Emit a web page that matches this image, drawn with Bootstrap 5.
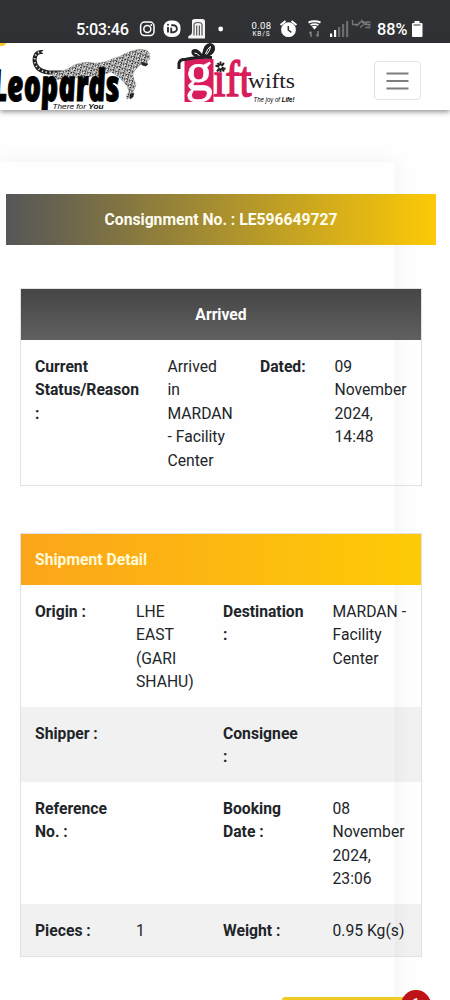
<!DOCTYPE html>
<html lang="en">
<head>
<meta charset="utf-8">
<meta name="viewport" content="width=device-width, initial-scale=1">
<title>Leopards Courier - Track Shipment</title>
<link href="https://cdn.jsdelivr.net/npm/bootstrap@5.3.0/dist/css/bootstrap.min.css" rel="stylesheet">
<style>
html{overflow:hidden}
body{font-family:Roboto,sans-serif;font-size:15.7px;line-height:23.45px;color:#212529;background:#fefefe;height:1000px;overflow:hidden}
.statusbar{height:43px;background:#303134;color:#fff}
.statusbar svg,.brandrow svg{display:block}
.brandrow{height:67px;background:#fff;box-shadow:0 2px 5px rgba(0,0,0,.42);z-index:2}
.brandrow .navbar-toggler{width:47px;height:39px;margin:1px 29px 0 0;border:1px solid #e2e2e2;border-radius:4px}
.panel{width:395px;height:860px;margin-top:52px;padding-top:32px;border-radius:0 4px 0 0;background:#fefefe;box-shadow:0 0 20px rgba(0,0,0,.06)}
.consign{width:430px;height:51px;padding-top:1px;margin-left:6px;background:linear-gradient(90deg,#555658,#fdc907);color:#fffef0}
.details{width:402px;margin-left:20px;border:1px solid #dee2e6}
.details table{width:400px;table-layout:fixed;border-collapse:collapse;margin:0}
.details th,.details td{padding:15px 13px 12px 14.5px;vertical-align:top;text-align:left}
.details th{padding-left:14px}
.details thead th{padding:14px 14px 13px 14px;height:51px;line-height:24px;color:#fff}
.dark-head{background:linear-gradient(#454545,#606060)}
.gold-head{background:linear-gradient(90deg,#fca51b,#fecb06)}
.gold-head th{color:#fffbd8 !important}
.shade{background:rgba(0,0,0,.05)}
.chatbar{left:282px;top:997px;width:140px;height:3px;background:#f0cb22;border-radius:3px 0 0 0}
.chatdot{left:401px;top:990px;width:30px;height:30px;background:#bd1216;color:#fff;font-size:11px;line-height:26px}
</style>
</head>
<body class="position-relative">
<div class="statusbar">
<svg width="450" height="43" viewBox="0 0 450 43" font-family="Roboto, sans-serif" fill="#fff">
  <text x="76" y="34.5" font-size="16.3" font-weight="500" textLength="53">5:03:46</text>
  <g fill="none" stroke="#fff" stroke-width="1.5"><rect x="140.6" y="22" width="13.4" height="13.6" rx="4"/><circle cx="147.3" cy="28.9" r="3.5"/></g>
  <circle cx="151.3" cy="24.9" r="1"/>
  <rect x="163.5" y="20.5" width="17" height="16.5" rx="7"/>
  <g fill="none" stroke="#303134" stroke-width="1.9"><path d="M168 27v5.5M171.2 25.2h2.200a3.500 3.500 0 0 1 0 7h-2.200v-4.400"/></g><circle cx="168" cy="24.800" r="1" fill="#303134"/>
  <path d="M192 20.500q.5-1.500 2.500-1.500h8q2.500 0 2.500 2.500v17h-16.500q-1-2.500 1-3 2.500-.5 2.500-4z" fill="#f4f4f4"/>
  <path d="M194 35.500V25q0-2.500 4-2.500t4 2.500v10.500M196.700 35.500V25.500M199.400 35.500V25.500" fill="none" stroke="#555" stroke-width="1.200"/>
  <circle cx="220.700" cy="29" r="2.400"/>
  <text x="251.500" y="29" font-size="9.500" textLength="19.500">0.08</text>
  <text x="252.500" y="36" font-size="6.500" textLength="17">KB/S</text>
  <circle cx="288.500" cy="29.700" r="7.400"/><path d="M280.500 25l5-4M296.500 25l-5-4" stroke="#fff" stroke-width="2"/><path d="M288.300 26v4l3 2.300" fill="none" stroke="#303134" stroke-width="1.500"/>
  <path d="M308.500 22.500q6-2.500 12 0M310.500 25q4-1.700 8 0" fill="none" stroke="#fff" stroke-width="1.900"/><path d="M311.800 26.500q2.700-1.400 5.400 0l-2.700 3z"/>
  <path d="M311 37v-5m-1.500 1.500 1.500-2M318 31v5m-1.500-1.500 1.500 2" stroke="#888" fill="none" stroke-width="1.400"/>
  <path d="M330 33.500h2.200V37H330zM334 30h2.200v7H334z"/><path d="M338 27h2.200v10H338zM342 24h2.200v13H342zM346 21h2.200v16H346z" fill="#6c6d70"/>
  <g fill="none" stroke="#77787b" stroke-width="1.300"><path d="M352.500 20v4.500h6q.5-2.500 3-2.500 2 0 2.500 2.500h6.500M356 26l3-2M360 27.500l3-2.500M361 20l9 6M370.500 22h-5M370.500 27.500h-5"/></g>
  <text x="377" y="34.800" font-size="16.300" font-weight="500" textLength="30.500">88%</text>
  <path d="M414.500 21h5v2h2q1 0 1 1v12q0 1-1 1h-8.500q-1 0-1-1V24q0-1 1-1h1.500z"/><path d="M413.500 24h7v2h-7z" fill="#999"/>
</svg>
</div>
<nav class="navbar brandrow p-0 flex-nowrap justify-content-between position-relative">
<svg width="310" height="67" viewBox="0 43 310 67">
  <defs><pattern id="spots" width="5.300" height="4.700" patternUnits="userSpaceOnUse" patternTransform="rotate(17)"><rect width="5.300" height="4.700" fill="#f2f2f2"/><path d="M.3 1.200q1.200-1.400 2.100 0l-.5 1M3.400.6l1.500.9-.8 1.200M.9 3.600l1.300-.5.8 1.200M4.200 3.900l.8-.4" fill="none" stroke="#111" stroke-width="1"/></pattern></defs>
  <path d="M0 43h6q-.5 3-5 3H0z" fill="#f3c51d"/>
  <path d="M43 52q-8-1-8.500 8 1 11 14 12.500h14" fill="none" stroke="#222" stroke-width="4"/>
  <path d="M43 52q-8-1-8.500 8 1 11 14 12.500h14" fill="none" stroke="#ddd" stroke-width="2" stroke-dasharray="1.300 2.600"/>
  <path d="M52 73q13-1 22-8 9-4 21-2 11 0 19-5 6-1 10-4 6-3 11-4 5-1.500 10 0 4 1 4.500 4l.5 5-3 2 1 3-3 2-4-2-3 3q-5 4-5 9 1 5 3 8-1 6-4 9l-1 4-4 2-1-3 3-4-2-6-8-9-8-5-11 4-48 4z" fill="url(#spots)" stroke="#777" stroke-width=".3"/>
  <path d="M141 62l7 2-2 2-4-1zM130 94l4-1-1 4-3 2zM145 56l3 1" fill="#222" stroke="#222" stroke-width=".5"/>
  <text transform="translate(-7 100.500) skewX(5)" x="0" y="0" font-family="Open Sans, sans-serif" font-weight="800" font-style="italic" font-size="43.500" textLength="128" lengthAdjust="spacingAndGlyphs" stroke="#000" stroke-width="1.200">Leopards</text>
  <text x="52.500" y="108.500" font-family="Liberation Sans, sans-serif" font-style="italic" font-size="8" textLength="51" lengthAdjust="spacingAndGlyphs">There for <tspan font-weight="700">You</tspan></text>
  <path d="M184.500 59h29v43h-29z" fill="#d91c5c"/>
  <path d="M179 69v-6q1-4 6-3.500l5-1q11-2 22-1" fill="none" stroke="#222024" stroke-width="3"/>
  <path d="M201 59q-12-3-9-9 5-3 10 4 2-11 8-11 6 1 5 7-2 6-12 9z" fill="#222024"/><path d="M194.500 53q3 0 5 3M205.500 54q2-6 5-7.500 0 4-4 8" stroke="#fff" stroke-width="1" fill="none"/>
  <g font-family="Liberation Serif, serif">
  <text x="185.500" y="90" font-size="54" fill="#fff" stroke="#fff" stroke-width=".8" textLength="27" lengthAdjust="spacingAndGlyphs">g</text>
  <text x="213.500" y="95.500" font-size="51" fill="#d91c5c" stroke="#d91c5c" stroke-width="1.600" textLength="38" lengthAdjust="spacingAndGlyphs">ıft</text>
  <text x="248" y="88" font-size="21" fill="#222024" textLength="47" lengthAdjust="spacingAndGlyphs">wifts</text></g>
  <path d="M220.500 61.500v10.500M215.500 65.500l10 3.500M217 71.500l7-8.500M217.500 63l6.500 8.500" stroke="#222024" stroke-width="2"/><circle cx="220.500" cy="67" r="1.400" fill="#fff"/>
  <text x="253.500" y="102" font-family="Liberation Sans, sans-serif" font-style="italic" font-size="6.500" textLength="41" lengthAdjust="spacingAndGlyphs">The joy of <tspan font-weight="700">Life!</tspan></text>
</svg>
<button class="navbar-toggler p-0 d-flex align-items-center justify-content-center flex-shrink-0 mt-2" type="button" aria-label="Toggle navigation">
<svg width="23" height="18" viewBox="0 0 23 18"><path d="M.5 1.500h22M.5 9h22M.5 16.500h22" stroke="#7d7d7d" stroke-width="1.800"/></svg>
</button>
</nav>
<main class="panel">
  <div class="consign d-flex align-items-center justify-content-center fw-bold">Consignment No. : LE596649727</div>
  <div class="details" style="margin-top:43px">
    <table>
      <colgroup><col style="width:132px"><col style="width:93px"><col style="width:74px"><col style="width:101px"></colgroup>
      <thead class="dark-head"><tr><th colspan="4" class="text-center">Arrived</th></tr></thead>
      <tbody><tr style="height:145px"><th>Current Status/Reason :</th><td>Arrived<br>in<br>MARDAN<br>- Facility Center</td><th>Dated:</th><td>09 November 2024, 14:48</td></tr></tbody>
    </table>
  </div>
  <div class="details" style="margin-top:47px">
    <table>
      <colgroup><col style="width:100.5px"><col style="width:87.500px"><col style="width:109px"><col style="width:103px"></colgroup>
      <thead class="gold-head"><tr><th colspan="4">Shipment Detail</th></tr></thead>
      <tbody>
      <tr style="height:122px"><th>Origin :</th><td>LHE EAST (GARI SHAHU)</td><th>Destination<br>:</th><td class="text-nowrap">MARDAN -<br>Facility<br>Center</td></tr>
      <tr class="shade" style="height:75px"><th>Shipper :</th><td></td><th>Consignee<br>:</th><td></td></tr>
      <tr style="height:122px"><th>Reference No. :</th><td></td><th>Booking Date :</th><td>08 November 2024, 23:06</td></tr>
      <tr class="shade" style="height:52px"><th>Pieces :</th><td>1</td><th>Weight :</th><td class="text-nowrap">0.95 Kg(s)</td></tr>
      </tbody>
    </table>
  </div>
</main>
<div class="chatbar position-absolute"></div>
<div class="chatdot position-absolute rounded-circle text-center fw-bold">1</div>
<script src="https://cdn.jsdelivr.net/npm/bootstrap@5.3.0/dist/js/bootstrap.bundle.min.js"></script>
</body>
</html>
